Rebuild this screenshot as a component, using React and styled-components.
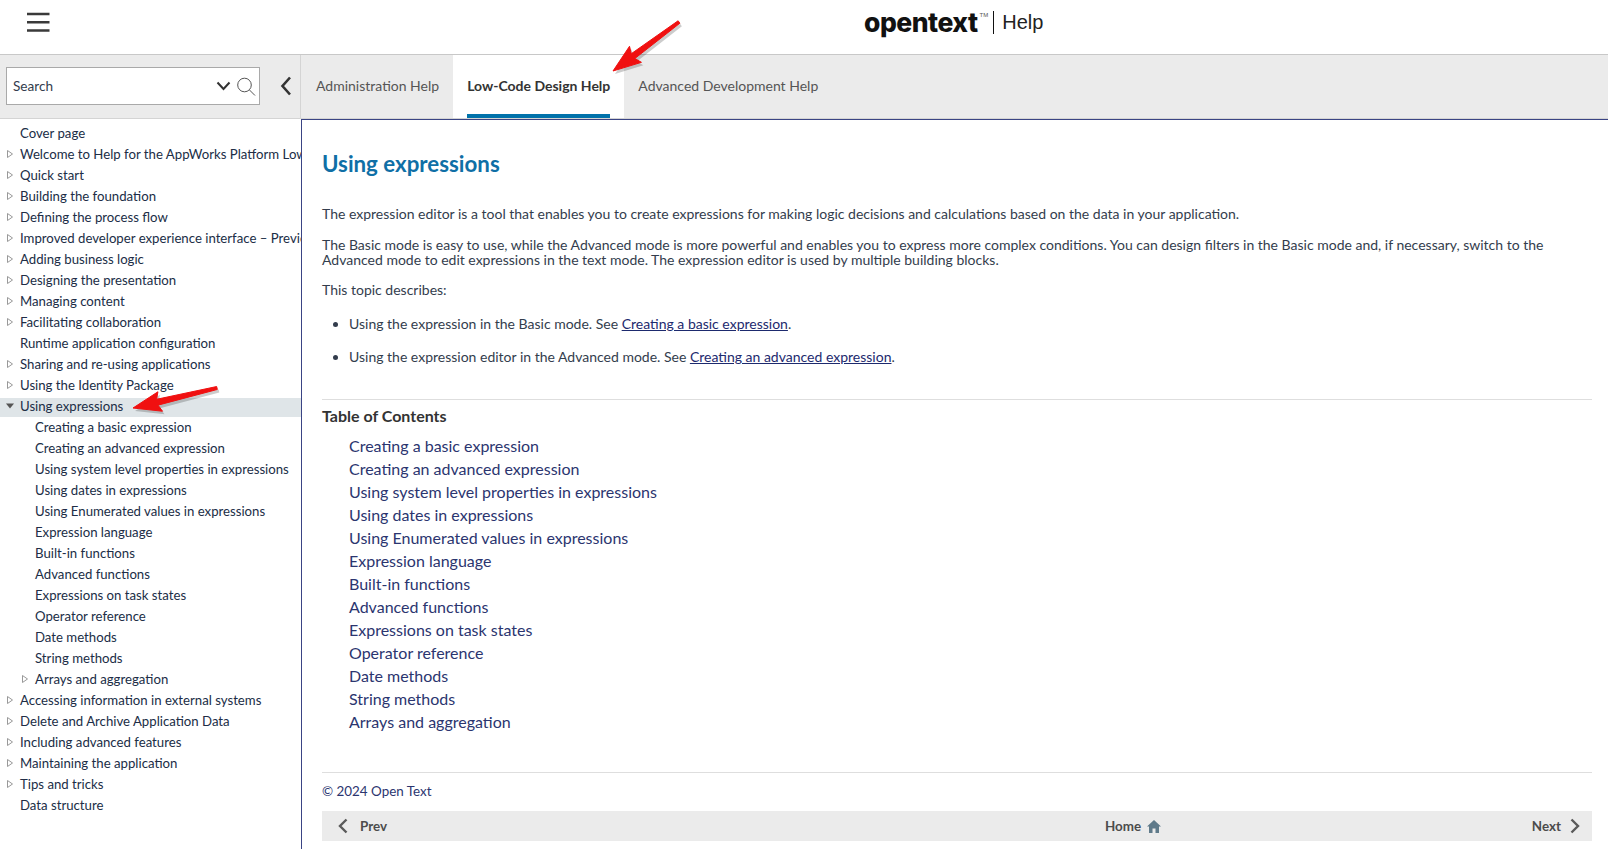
import React from "react";
import styled, { createGlobalStyle } from "styled-components";

const Global = createGlobalStyle`
  html, body { margin: 0; padding: 0; background: #fff; }
  body { font-family: Lato, "Open Sans", sans-serif; overflow: hidden; }
  a { color: inherit; }
`;
const Page = styled.div`position: relative; width: 1608px; height: 849px; overflow: hidden; display: flex; flex-direction: column;`;
const Header = styled.header`
  height: 54px; flex: none; display: flex; align-items: center; box-sizing: content-box;
  border-bottom: 1px solid #c8c8c8; padding-left: 27px;
`;
const Burger = styled.svg`display: block; margin-bottom: 9px;`;
const Brand = styled.div`display: flex; align-items: center; margin: 0 0 10px 814px; height: 30px;`;
const BrandName = styled.span`
  font-family: Inter, "Liberation Sans", sans-serif; font-weight: 800; font-size: 26.5px; letter-spacing: -0.5px; color: #111; line-height: 1;
`;
const Tm = styled.span`font-family: "Liberation Sans", sans-serif; font-size: 6px; color: #555; align-self: flex-start; margin: 5px 5px 0 2px;`;
const Divider = styled.div`width: 1px; height: 23px; background: #111; margin-right: 8px;`;
const BrandHelp = styled.span`font-family: "Liberation Sans", Arial, sans-serif; font-size: 20px; color: #222;`;

const Toolbar = styled.div`height: 63px; flex: none; display: flex; background: #ebebeb;`;
const SearchZone = styled.div`width: 301px; flex: none; display: flex; align-items: center; padding: 0 0 1px 6px; box-sizing: border-box; border-right: 1px solid #d4d4d4;`;
const SearchBox = styled.div`
  width: 254px; height: 38px; background: #fff; border: 1px solid #a9a9a9; box-sizing: border-box; display: flex; align-items: center;
  padding: 0 2px 1px 6px; font-size: 13.6px; color: #333d4d;
`;
const SearchLabel = styled.span`flex: 1;`;
const Collapse = styled.svg`margin-left: 20px; display: block;`;
const Tabs = styled.nav`display: flex; height: 63px; padding-left: 1px;`;
const Tab = styled.div`
  padding: 0 14px 2px; display: flex; align-items: center; position: relative; font-size: 14px; color: ${p => (p.$active ? "#333" : "#555")};
  background: ${p => (p.$active ? "#fff" : "transparent")}; font-weight: ${p => (p.$active ? 700 : 400)};
  ${p => p.$active && `&::after { content: ""; position: absolute; left: 14px; right: 14px; bottom: 0; height: 4px; background: #0072aa; }`}
`;

const Body = styled.div`flex: 1; display: flex; min-height: 0; border-top: 1px solid #d4d4d4;`;
const Sidebar = styled.aside`width: 301px; flex: none; overflow: hidden; padding-top: 4px; box-sizing: border-box;`;
const Row = styled.div`
  height: 19px; margin-top: 2px; box-sizing: border-box; display: flex; align-items: center; white-space: nowrap; font-size: 13.2px; color: #202d46; 
  padding: 0 0 3px ${p => p.$depth * 15 + 6}px; background: ${p => (p.$selected ? "#dfe5e8" : "transparent")};
`;
const Twist = styled.svg`width: 8px; height: 10px; flex: none; margin-right: 6px;`;
const Main = styled.main`
  flex: 1; border-left: 1px solid #3a4484; border-top: 1px solid #3a4484; padding: 0 16px 0 20px; box-sizing: border-box; min-width: 0; color: #333d4d;
`;
const Title = styled.h1`margin: 29px 0 0; font-size: 22.3px; line-height: 29px; font-weight: 700; color: #0f6fa6;`;
const Para = styled.p`margin: ${p => p.$mt}px 0 0; font-size: 14px; line-height: 15.5px; color: #333d4d; max-width: 1230px;`;
const Bullets = styled.ul`margin: 18px 0 0; padding: 0 0 0 27px; font-size: 14px; line-height: 18px;`;
const Bullet = styled.li`margin-bottom: 15px;`;
const Inline = styled.a`color: #1d2a6e; text-decoration: underline;`;
const Rule = styled.hr`border: 0; border-top: 1px solid #dedede; margin: ${p => p.$mt}px 0 0;`;
const TocTitle = styled.h2`margin: 6px 0 0; font-size: 16px; line-height: 19px; font-weight: 700; color: #333;`;
const Toc = styled.div`margin: 9px 0 0 27px; display: flex; flex-direction: column;`;
const TocLink = styled.a`font-size: 16px; line-height: 23px; color: #2b356f; text-decoration: none;`;
const Copy = styled.div`margin-top: 10px; font-size: 13.4px; line-height: 16px; color: #2b356f;`;
const Pager = styled.div`
  margin-top: 12px; height: 30px; background: #ebebeb; display: grid; grid-template-columns: 767px auto 1fr; align-items: center;
  font-size: 13.4px; font-weight: 700; color: #4c4c4c; padding: 0 12px 0 16px; 
`;
const PagerItem = styled.div`display: flex; align-items: center; gap: ${p => p.$gap}px; justify-content: ${p => p.$justify};`;
const ArrowLayer = styled.svg`position: absolute; left: 0; top: 0; pointer-events: none; overflow: visible;`;

const tree = [
  [0, "Cover page", null], [0, "Welcome to Help for the AppWorks Platform Low-Code Design", "c"], [0, "Quick start", "c"],
  [0, "Building the foundation", "c"], [0, "Defining the process flow", "c"],
  [0, "Improved developer experience interface – Preview", "c"], [0, "Adding business logic", "c"],
  [0, "Designing the presentation", "c"], [0, "Managing content", "c"], [0, "Facilitating collaboration", "c"],
  [0, "Runtime application configuration", null], [0, "Sharing and re-using applications", "c"],
  [0, "Using the Identity Package", "c"], [0, "Using expressions", "o"],
  [1, "Creating a basic expression", null], [1, "Creating an advanced expression", null],
  [1, "Using system level properties in expressions", null], [1, "Using dates in expressions", null],
  [1, "Using Enumerated values in expressions", null], [1, "Expression language", null], [1, "Built-in functions", null],
  [1, "Advanced functions", null], [1, "Expressions on task states", null], [1, "Operator reference", null],
  [1, "Date methods", null], [1, "String methods", null], [1, "Arrays and aggregation", "c"],
  [0, "Accessing information in external systems", "c"], [0, "Delete and Archive Application Data", "c"],
  [0, "Including advanced features", "c"], [0, "Maintaining the application", "c"], [0, "Tips and tricks", "c"], [0, "Data structure", null],
];
const toc = ["Creating a basic expression", "Creating an advanced expression", "Using system level properties in expressions",
  "Using dates in expressions", "Using Enumerated values in expressions", "Expression language", "Built-in functions", "Advanced functions",
  "Expressions on task states", "Operator reference", "Date methods", "String methods", "Arrays and aggregation"];

function TwistIcon({ kind }) {
  if (!kind) return <Twist as="span" />;
  if (kind === "o") return <Twist viewBox="0 0 8 10"><path d="M0 2.5h8L4 7.5z" fill="#555" /></Twist>;
  return <Twist viewBox="0 0 8 10"><path d="M1.5 1.5L6.5 5L1.5 8.5z" fill="none" stroke="#999" /></Twist>;
}
function RedArrow({ x1, y1, x2, y2 }) {
  const a = Math.atan2(y2 - y1, x2 - x1), c = Math.cos(a), s = Math.sin(a);
  const bx = x2 - 25 * c, by = y2 - 25 * s;
  const nx = -s, ny = c;
  const d = `M${x1 - nx * 1.5} ${y1 - ny * 1.5}L${bx - nx * 3} ${by - ny * 3}L${bx - 3 * c - nx * 10} ${by - 3 * s - ny * 10}L${x2} ${y2}L${bx - 3 * c + nx * 10} ${by - 3 * s + ny * 10}L${bx + nx * 3} ${by + ny * 3}L${x1 + nx * 1.5} ${y1 + ny * 1.5}Z`;
  return (
    <ArrowLayer width="1608" height="849">
      <path d={d} fill="#000" opacity=".2" transform="translate(2 3)" />
      <path d={d} fill="#f01010" stroke="#f01010" strokeWidth="1" strokeLinejoin="round" />
    </ArrowLayer>
  );
}

export default function App() {
  return (
    <Page>
      <Global />
      <Header>
        <Burger width="23" height="21" viewBox="0 0 23 21">
          <path d="M0 2h22.5M0 10.2h22.5M0 18.5h22.5" stroke="#3a3a3a" strokeWidth="2.6" />
        </Burger>
        <Brand>
          <BrandName>opentext</BrandName><Tm>TM</Tm><Divider /><BrandHelp>Help</BrandHelp>
        </Brand>
      </Header>
      <Toolbar>
        <SearchZone>
          <SearchBox>
            <SearchLabel>Search</SearchLabel>
            <svg width="15" height="10" viewBox="0 0 15 10"><path d="M1.5 1.5L7.5 8L13.5 1.5" fill="none" stroke="#333" strokeWidth="2" /></svg>
            <svg width="22" height="22" viewBox="0 0 22 22" style={{ marginLeft: 4 }}><circle cx="9.5" cy="10" r="6.8" fill="none" stroke="#555" strokeWidth="1" /><path d="M14.5 15L20 20.5" stroke="#555" strokeWidth="1" /></svg>
          </SearchBox>
          <Collapse width="12" height="20" viewBox="0 0 12 20"><path d="M10 1.5L2.5 10L10 18.5" fill="none" stroke="#333" strokeWidth="2.6" /></Collapse>
        </SearchZone>
        <Tabs>
          <Tab>Administration Help</Tab>
          <Tab $active>Low-Code Design Help</Tab>
          <Tab>Advanced Development Help</Tab>
        </Tabs>
      </Toolbar>
      <Body>
        <Sidebar>
          {tree.map(([d, t, k], i) => (
            <Row key={i} $depth={d} $selected={t === "Using expressions"}>
              <TwistIcon kind={k} />{t}
            </Row>
          ))}
        </Sidebar>
        <Main>
          <Title>Using expressions</Title>
          <Para $mt={28}>The expression editor is a tool that enables you to create expressions for making logic decisions and calculations based on the data in your application.</Para>
          <Para $mt={15}>The Basic mode is easy to use, while the Advanced mode is more powerful and enables you to express more complex conditions. You can design filters in the Basic mode and, if necessary, switch to the Advanced mode to edit expressions in the text mode. The expression editor is used by multiple building blocks.</Para>
          <Para $mt={14}>This topic describes:</Para>
          <Bullets>
            <Bullet>Using the expression in the Basic mode. See <Inline>Creating a basic expression</Inline>.</Bullet>
            <Bullet>Using the expression editor in the Advanced mode. See <Inline>Creating an advanced expression</Inline>.</Bullet>
          </Bullets>
          <Rule $mt={33} />
          <TocTitle>Table of Contents</TocTitle>
          <Toc>{toc.map(t => <TocLink key={t}>{t}</TocLink>)}</Toc>
          <Rule $mt={39} />
          <Copy>© 2024 Open Text</Copy>
          <Pager>
            <PagerItem $gap={12} $justify="flex-start">
              <svg width="10" height="16" viewBox="0 0 10 16"><path d="M8.5 1.5L2 8L8.5 14.5" fill="none" stroke="#5a5a5a" strokeWidth="2.4" /></svg>Prev
            </PagerItem>
            <PagerItem $gap={6} $justify="center">
              Home
              <svg width="14" height="13" viewBox="0 0 14 13"><path d="M7 0L14 6.5H12V13H8.5V8.5H5.5V13H2V6.5H0z" fill="#5f7a8a" /></svg>
            </PagerItem>
            <PagerItem $gap={9} $justify="flex-end">
              Next
              <svg width="10" height="16" viewBox="0 0 10 16"><path d="M1.5 1.5L8 8L1.5 14.5" fill="none" stroke="#5a5a5a" strokeWidth="2.4" /></svg>
            </PagerItem>
          </Pager>
        </Main>
      </Body>
      <RedArrow x1={679} y1={22} x2={613} y2={71} />
      <RedArrow x1={217} y1={388} x2={133} y2={408} />
    </Page>
  );
}
